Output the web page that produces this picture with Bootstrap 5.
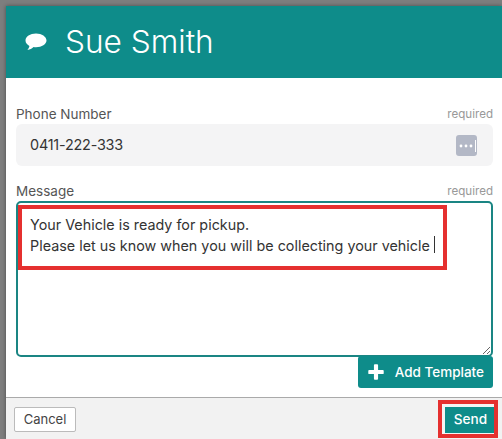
<!doctype html>
<html lang="en">
<head>
<meta charset="utf-8">
<title>Send SMS</title>
<link href="https://cdn.jsdelivr.net/npm/bootstrap@5.3.0/dist/css/bootstrap.min.css" rel="stylesheet">
<style>
html,body{height:100%;overflow:hidden}
body{background:#7e7e7e;font-family:Inter,"Liberation Sans",sans-serif;color:#444;padding:6px 0 0 6px}
.sheet{height:433px;background:#fff;box-shadow:0 0 4px rgba(0,0,0,.4)}
.sheet-head{height:72px;background:#0e8c8a;color:#fff;padding-left:19px;gap:18px}
.sheet-head h1{font-size:31.6px;font-weight:300;margin:0;line-height:1}
.sheet-body{height:319px;padding:27px 9px 0 10px}
.lbl-row{height:18px;font-size:13.5px;color:#555;line-height:18px}
.req{font-size:11.6px;color:#999}
.phone-box{height:42px;background:#f4f4f5;border-radius:6px;padding:0 16px 0 14px;font-size:14.4px;color:#333;margin-top:1px;margin-bottom:16px;letter-spacing:-.2px}
.dots-ico{display:block}
.msg-wrap{position:relative;height:156px;margin-top:1px}
.msg-input{display:block;width:100%;height:156px;border:2px solid #1a8583;border-radius:5px;padding:11px 12px;font-size:14.35px;line-height:21px;color:#333;font-family:inherit;outline:0;resize:both;box-sizing:border-box}
.hilite{position:absolute;left:2px;top:4px;width:429px;height:65px;border:4px solid #e5302f;pointer-events:none}
.caret-bar{position:absolute;left:418px;top:35px;width:1px;height:17px;background:#333}
.add-tpl{height:32px;margin-top:-1px;background:#0e8c8a;color:#fff;border:0;border-radius:3px;font-size:13.5px;font-weight:500;padding:0 9px 0 10px;gap:11px;position:relative}
.add-tpl:hover{background:#0e8c8a;color:#fff}
.sheet-foot{height:42px;background:#f2f2f2;border-top:1px solid #aaa;padding:0 8px}
.cancel-btn{height:25px;width:62px;margin-top:1px;padding:0;background:#fff;border:1px solid #bbb;border-radius:2px;font-size:13px;color:#444;line-height:1}
.send-wrap{border:4px solid #e5302f;padding:2px 0 0 3px;background:#f4f4f4;margin:1px -4px 0 0;height:38px;width:60px}
.send-btn{height:26px;width:49px;padding:0 0 0 2px;background:#0e8c8a;color:#fff;border:0;border-radius:0;font-size:13.6px;font-weight:500}
.send-btn:hover{background:#0e8c8a;color:#fff}
</style>
</head>
<body>
<div class="sheet d-flex flex-column">
  <div class="sheet-head d-flex align-items-center">
    <svg width="22" height="18" viewBox="0 0 22 18" aria-hidden="true"><path fill="#fff" d="M11 0.5C5.2 0.5 0.5 3.5 0.5 7.5c0 2.3 1.5 4.2 3.9 5.4-.2 1.5-.9 2.7-2 4 2.500-.2 4.700-1.400 6.200-2.900.8.100 1.600.2 2.400.2 5.800 0 10.500-3 10.500-6.700S16.800.5 11 .5z"/></svg>
    <h1>Sue Smith</h1>
  </div>
  <div class="sheet-body">
    <div class="lbl-row d-flex justify-content-between align-items-center"><span>Phone Number</span><span class="req">required</span></div>
    <div class="phone-box d-flex justify-content-between align-items-center">
      <span>0411-222-333</span>
      <svg class="dots-ico" width="21" height="21" viewBox="0 0 21 21" aria-hidden="true"><rect width="21" height="21" rx="3" fill="#b3b8c6"/><circle cx="5" cy="11" r="1.400" fill="#fff"/><circle cx="10" cy="11" r="1.400" fill="#fff"/><circle cx="15" cy="11" r="1.400" fill="#fff"/><rect x="19" y="5" width="1" height="12" fill="#fff"/></svg>
    </div>
    <div class="lbl-row d-flex justify-content-between align-items-center"><span>Message</span><span class="req">required</span></div>
    <div class="msg-wrap">
      <textarea class="msg-input" aria-label="Message">Your Vehicle is ready for pickup.
Please let us know when you will be collecting your vehicle</textarea>
      <div class="hilite"></div>
      <div class="caret-bar"></div>
    </div>
    <div class="d-flex justify-content-end">
      <button class="btn add-tpl d-inline-flex align-items-center" type="button">
        <svg width="16" height="16" viewBox="0 0 17 17" aria-hidden="true"><path fill="#fff" d="M6.300 1.300a1 1 0 0 1 1-1h2.400a1 1 0 0 1 1 1v5h5a1 1 0 0 1 1 1v2.400a1 1 0 0 1-1 1h-5v5a1 1 0 0 1-1 1H7.300a1 1 0 0 1-1-1v-5h-5a1 1 0 0 1-1-1V7.300a1 1 0 0 1 1-1h5z"/></svg>
        <span>Add Template</span>
      </button>
    </div>
  </div>
  <div class="sheet-foot d-flex justify-content-between align-items-center">
    <button class="btn cancel-btn" type="button">Cancel</button>
    <div class="send-wrap"><button class="btn send-btn" type="button">Send</button></div>
  </div>
</div>
<script src="https://cdn.jsdelivr.net/npm/bootstrap@5.3.0/dist/js/bootstrap.bundle.min.js"></script>
</body>
</html>
